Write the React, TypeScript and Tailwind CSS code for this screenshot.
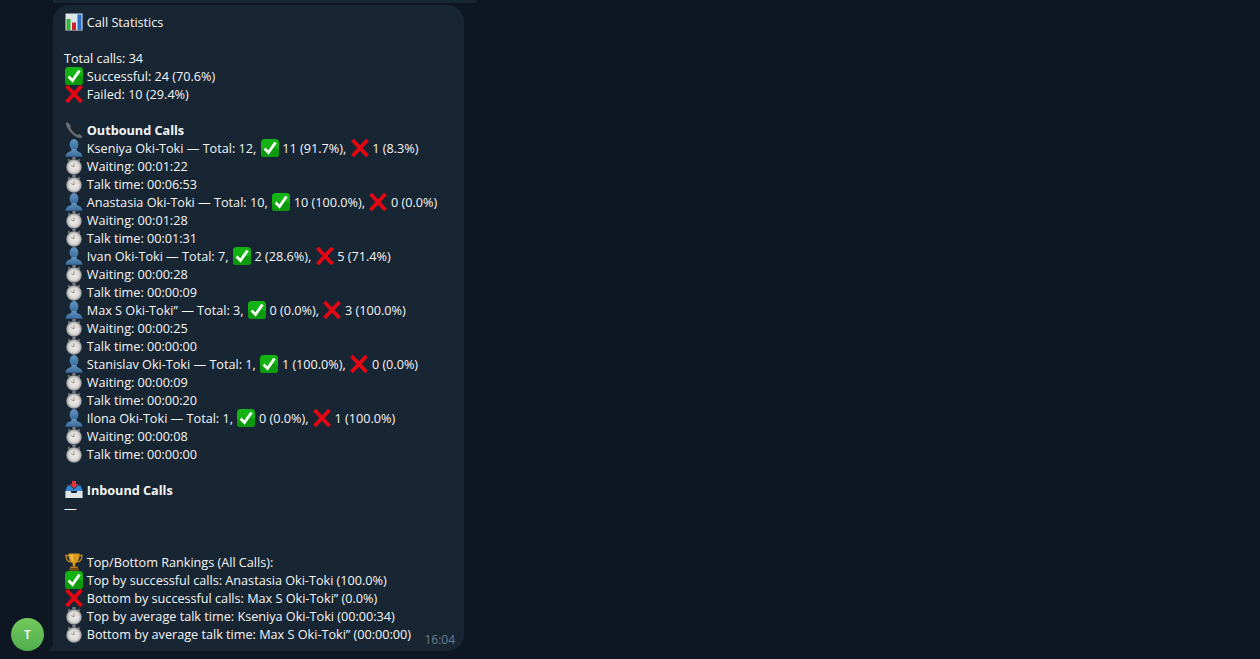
import React, { useId } from "react";

const Chart = () => (
  <svg viewBox="0 0 18 18" className="w-full h-full">
    <rect x="0.5" y="0.5" width="17" height="17" fill="#dfe6ea" />
    <rect x="1.5" y="6" width="4" height="11" fill="#35b53a" />
    <rect x="7" y="9.5" width="4" height="7.5" fill="#c9242c" />
    <rect x="12.5" y="1.5" width="4" height="15.5" fill="#2a6fc9" />
  </svg>
);

const Check = () => (
  <svg viewBox="0 0 18 18" className="w-full h-full">
    <rect x="0" y="0" width="18" height="18" rx="3.5" fill="#12b312" />
    <rect x="0" y="9" width="18" height="9" rx="3.5" fill="#0c9a0c" />
    <path d="M3.5 9.5 L7.5 13.5 L14.5 3.5" fill="none" stroke="#f4fff4" strokeWidth="3" />
  </svg>
);

const Cross = () => (
  <svg viewBox="0 0 18 18" className="w-full h-full">
    <path d="M1.5 1 L16.5 17 M16.5 1 L1.5 17" stroke="#e30613" strokeWidth="3.8" />
  </svg>
);

const Phone = () => (
  <svg viewBox="0 0 18 18" className="w-full h-full">
    <path
      d="M2.2 1 C1 1.4 0.6 2.4 1 3.8 C2.4 8.6 8 15.4 14 17 C15.8 17.4 17 16.6 17.4 15.4 L14.6 13 C13.8 13.4 12.8 14 11.8 13.6 C9.4 12.6 6.4 9.2 5.4 6.6 C5.2 5.8 5.6 5 6 4.4 Z"
      fill="#6a6d70"
    />
  </svg>
);

const User = () => {
  const id = useId();
  return (
    <svg viewBox="0 0 18 18" className="w-full h-full">
      <defs>
        <linearGradient id={id} x1="0" y1="0" x2="0" y2="1">
          <stop offset="0" stopColor="#6496c4" />
          <stop offset="1" stopColor="#386a9a" />
        </linearGradient>
      </defs>
      <ellipse cx="9" cy="5.6" rx="4.4" ry="5.6" fill={`url(#${id})`} />
      <path d="M6.6 10 L11.4 10 L11.8 12 C14.6 12.8 17 14 17.6 17.8 L0.4 17.8 C1 14 3.4 12.8 6.2 12 Z" fill={`url(#${id})`} />
    </svg>
  );
};

const Stopwatch = () => {
  const id = useId();
  return (
    <svg viewBox="0 0 18 18" className="w-full h-full">
      <defs>
        <radialGradient id={id} cx="0.5" cy="0.5" r="0.55">
          <stop offset="0" stopColor="#eeecea" />
          <stop offset="0.6" stopColor="#dcd9d5" />
          <stop offset="0.82" stopColor="#a2a4a6" />
          <stop offset="1" stopColor="#66696c" />
        </radialGradient>
      </defs>
      <rect x="7.4" y="0" width="3.2" height="2.4" fill="#7b7e82" />
      <rect x="3" y="2" width="2" height="2" fill="#6d7176" transform="rotate(-40 4 3)" />
      <rect x="13" y="2" width="2" height="2" fill="#6d7176" transform="rotate(40 14 3)" />
      <circle cx="9" cy="10" r="7.8" fill={`url(#${id})`} />
      <path d="M9 10 L9 6.4 M9 10 L6.2 8.6" stroke="#8a8886" strokeWidth="0.9" />
    </svg>
  );
};

const Inbox = () => (
  <svg viewBox="0 0 18 18" className="w-full h-full">
    <path d="M7 0 H11 V3 H13.4 L9 7.4 L4.6 3 H7 Z" fill="#e0343c" />
    <path d="M2.4 4.5 H5.4 L9 8.4 L12.6 4.5 H15.6 L17.6 10 H0.4 Z" fill="#2f86cf" />
    <path d="M0.4 10 H5.5 L6.5 12 H11.5 L12.5 10 H17.6 V17 H0.4 Z" fill="#dfe4e8" />
  </svg>
);

const Trophy = () => (
  <svg viewBox="0 0 18 18" className="w-full h-full">
    <path
      d="M4 2.5 H1 C1 6 2.4 8.4 5.4 9 M14 2.5 H17 C17 6 15.6 8.4 12.6 9"
      fill="none"
      stroke="#c98a1c"
      strokeWidth="1.3"
    />
    <path d="M3.6 0.6 H14.4 C14.6 6 13 9.4 10.2 10.6 V13.4 H7.8 V10.6 C5 9.4 3.4 6 3.6 0.6 Z" fill="#d9981f" />
    <path d="M5.4 1.4 H8 C7.8 4.6 8 7 8.6 9 C6.4 7.6 5.4 5 5.4 1.4 Z" fill="#f2c14e" />
    <rect x="5.2" y="13.6" width="7.6" height="1.8" fill="#b97c16" />
    <rect x="4.2" y="15.4" width="9.6" height="2.2" fill="#7d5310" />
  </svg>
);

// emoji sits on the 18px line box, advance matches the message font
const Em = ({ children }: { children: React.ReactNode }) => (
  <span className="inline-block align-top w-[18px] h-[18px] ml-[1px] mr-[0.5px]">{children}</span>
);

const Ok = () => (
  <Em>
    <Check />
  </Em>
);
const No = () => (
  <Em>
    <Cross />
  </Em>
);

type Agent = {
  name: string;
  total: number;
  ok: string;
  fail: string;
  waiting: string;
  talk: string;
};

const agents: Agent[] = [
  { name: "Kseniya Oki-Toki", total: 12, ok: "11 (91.7%)", fail: "1 (8.3%)", waiting: "00:01:22", talk: "00:06:53" },
  { name: "Anastasia Oki-Toki", total: 10, ok: "10 (100.0%)", fail: "0 (0.0%)", waiting: "00:01:28", talk: "00:01:31" },
  { name: "Ivan Oki-Toki", total: 7, ok: "2 (28.6%)", fail: "5 (71.4%)", waiting: "00:00:28", talk: "00:00:09" },
  { name: "Max S Oki-Toki\u201D", total: 3, ok: "0 (0.0%)", fail: "3 (100.0%)", waiting: "00:00:25", talk: "00:00:00" },
  { name: "Stanislav Oki-Toki", total: 1, ok: "1 (100.0%)", fail: "0 (0.0%)", waiting: "00:00:09", talk: "00:00:20" },
  { name: "Ilona Oki-Toki", total: 1, ok: "0 (0.0%)", fail: "1 (100.0%)", waiting: "00:00:08", talk: "00:00:00" },
];

const Line = ({ children }: { children?: React.ReactNode }) => (
  <div className="h-[18px] whitespace-nowrap">{children}</div>
);

const Timer = ({ label, value }: { label: string; value: string }) => (
  <Line>
    <Em>
      <Stopwatch />
    </Em>{" "}
    {label}: {value}
  </Line>
);

export default function App() {
  return (
    <div className="h-[659px] overflow-hidden bg-[#0e1621] font-['Open_Sans',sans-serif] text-[12.7px] leading-[18px] tracking-[-0.02px] text-[#f5f5f5]">
      <div className="ml-[53px] h-[3px] w-[424px] rounded-br-[16px] bg-[#182533]" />
      <div className="mt-[2px] flex items-end pl-[11px]">
        <div className="flex h-[33px] w-[33px] items-center justify-center rounded-full bg-gradient-to-b from-[#72c95c] to-[#4fae4e] text-[12px] font-semibold text-white">
          T
        </div>
        <div className="relative ml-[9px] w-[411px] rounded-[16px] rounded-bl-none bg-[#182533] py-[8px] pl-[11px] pr-[12px]">
          <svg viewBox="0 0 7 11" className="absolute bottom-0 left-[-6px] h-[11px] w-[7px]">
            <path d="M7 0 C7 5 4.5 9 0 11 L7 11 Z" fill="#182533" />
          </svg>
          <Line>
            <Em>
              <Chart />
            </Em>{" "}
            Call Statistics
          </Line>
          <Line />
          <Line>Total calls: 34</Line>
          <Line>
            <Ok /> Successful: 24 (70.6%)
          </Line>
          <Line>
            <No /> Failed: 10 (29.4%)
          </Line>
          <Line />
          <Line>
            <Em>
              <Phone />
            </Em>{" "}
            <b className="font-bold">Outbound Calls</b>
          </Line>
          {agents.map((a) => (
            <React.Fragment key={a.name}>
              <Line>
                <Em>
                  <User />
                </Em>{" "}
                {a.name} — Total: {a.total}, <Ok /> {a.ok}, <No /> {a.fail}
              </Line>
              <Timer label="Waiting" value={a.waiting} />
              <Timer label="Talk time" value={a.talk} />
            </React.Fragment>
          ))}
          <Line />
          <Line>
            <Em>
              <Inbox />
            </Em>{" "}
            <b className="font-bold">Inbound Calls</b>
          </Line>
          <Line>—</Line>
          <Line />
          <Line />
          <Line>
            <Em>
              <Trophy />
            </Em>{" "}
            Top/Bottom Rankings (All Calls):
          </Line>
          <Line>
            <Ok /> Top by successful calls: Anastasia Oki-Toki (100.0%)
          </Line>
          <Line>
            <No /> Bottom by successful calls: Max S Oki-Toki” (0.0%)
          </Line>
          <Timer label="Top by average talk time" value="Kseniya Oki-Toki (00:00:34)" />
          <Timer label="Bottom by average talk time" value="Max S Oki-Toki” (00:00:00)" />
          <span className="absolute bottom-[3px] right-[9px] text-[12px] leading-[16px] text-[#6d7f8f]">16:04</span>
        </div>
      </div>
    </div>
  );
}
